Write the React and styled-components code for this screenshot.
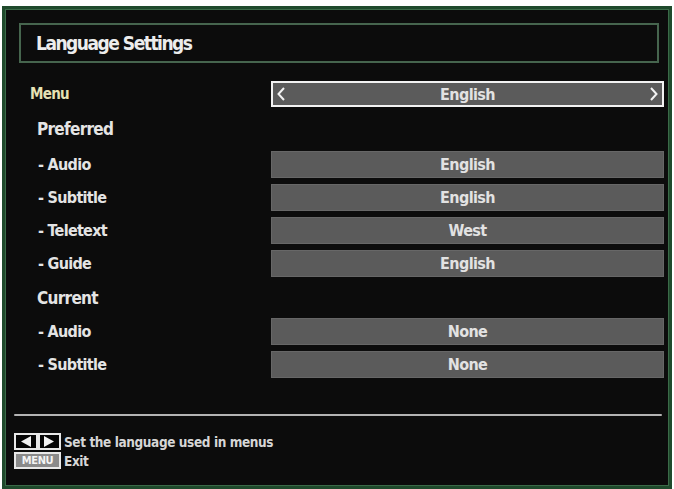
import React from "react";
import styled, { createGlobalStyle } from "styled-components";

const Global = createGlobalStyle`
  html, body { margin: 0; padding: 0; background: #ffffff; }
  body { font-family: "DejaVu Sans Condensed", "DejaVu Sans", sans-serif; }
  #root { width: 674px; height: 489px; }
`;

const Page = styled.div`
  width: 674px;
  height: 489px;
  padding: 6px 2px 0 2px;
  box-sizing: border-box;
`;

const Frame = styled.div`
  width: 670px;
  height: 483px;
  box-sizing: border-box;
  background: #0c0c0c;
  border: 3px solid #1f4a2c;
  box-shadow: inset 0 0 0 1px #3b6a48;
  padding: 14px 0 0 0;
  display: flex;
  flex-direction: column;
`;

const TitleBar = styled.div`
  margin-left: 14px;
  width: 640px;
  height: 40px;
  box-sizing: border-box;
  border: 2px solid #46654e;
  display: flex;
  align-items: center;
  padding-left: 15px;
`;

const Title = styled.span`
  color: #ececec;
  font-weight: bold;
  font-size: 19px;
  letter-spacing: -1.5px;
`;

const List = styled.div`
  margin-top: 18px;
  display: flex;
  flex-direction: column;
  gap: 6px;
`;

const Row = styled.div`
  display: grid;
  grid-template-columns: 266px 393px;
  height: ${(p) => p.$h || 27}px;
  align-items: center;
`;

const Label = styled.span`
  padding-left: ${(p) => p.$indent}px;
  color: ${(p) => (p.$accent ? "#e6e2b4" : "#e4e4e4")};
  font-weight: bold;
  font-size: ${(p) => p.$size || 16}px;
  letter-spacing: -0.7px;
`;

const Value = styled.div`
  height: 100%;
  box-sizing: border-box;
  background: #5b5b5b;
  border: ${(p) => (p.$selected ? "2px solid #f2f2f2" : "1px solid #676767")};
  display: flex;
  align-items: center;
  justify-content: space-between;
  padding: 0 3px;
  color: #e2e2e2;
  font-weight: bold;
  font-size: 16px;
  letter-spacing: -0.6px;
`;

const ValueText = styled.span`
  flex: 1;
  text-align: center;
`;

const Arrow = styled.span`
  width: 10px;
  display: flex;
  justify-content: center;
`;

const Separator = styled.div`
  margin-top: 36px;
  margin-left: 9px;
  width: 648px;
  height: 2px;
  background: #b4b4b4;
  border-radius: 1px;
`;

const Footer = styled.div`
  margin-top: 17px;
  margin-left: 9px;
  display: flex;
  flex-direction: column;
  gap: 2px;
`;

const HelpRow = styled.div`
  display: flex;
  align-items: center;
  gap: 3px;
  height: 17px;
`;

const KeyGroup = styled.div`
  display: flex;
  width: 47px;
  height: 17px;
`;

const ArrowKey = styled.div`
  flex: 1;
  box-sizing: border-box;
  border: 2px solid #e8e8e8;
  background: #050505;
  display: flex;
  align-items: center;
  justify-content: center;
`;

const MenuKey = styled.div`
  width: 47px;
  height: 17px;
  box-sizing: border-box;
  border: 2px solid #e8e8e8;
  background: #8a8a8a;
  color: #f4f4f4;
  font-weight: bold;
  font-size: 11px;
  letter-spacing: -0.3px;
  display: flex;
  align-items: center;
  justify-content: center;
`;

const HelpText = styled.span`
  color: #d6d6d6;
  font-weight: bold;
  font-size: 13.5px;
  letter-spacing: -0.4px;
`;

const Chevron = ({ dir }) => (
  <svg width="8" height="14" viewBox="0 0 8 14">
    <path
      d={dir === "left" ? "M7 1 L1.5 7 L7 13" : "M1 1 L6.5 7 L1 13"}
      fill="none"
      stroke="#f2f2f2"
      strokeWidth="2"
    />
  </svg>
);

const Tri = ({ dir }) => (
  <svg width="10" height="11" viewBox="0 0 10 11">
    <path d={dir === "left" ? "M10 0 L0 5.5 L10 11 Z" : "M0 0 L10 5.5 L0 11 Z"} fill="#f2f2f2" />
  </svg>
);

const rows = [
  { label: "Menu", indent: 25, accent: true, size: 15, value: "English", selected: true, h: 26 },
  { label: "Preferred", indent: 32, size: 17, h: 32 },
  { label: "- Audio", indent: 33, value: "English" },
  { label: "- Subtitle", indent: 33, value: "English" },
  { label: "- Teletext", indent: 33, value: "West" },
  { label: "- Guide", indent: 33, value: "English" },
  { label: "Current", indent: 32, size: 17, h: 29 },
  { label: "- Audio", indent: 33, value: "None" },
  { label: "- Subtitle", indent: 33, value: "None" },
];

export default function App() {
  return (
    <>
      <Global />
      <Page>
        <Frame>
          <TitleBar>
            <Title>Language Settings</Title>
          </TitleBar>
          <List>
            {rows.map((r, i) => (
              <Row key={i} $h={r.h}>
                <Label $indent={r.indent} $accent={r.accent} $size={r.size}>
                  {r.label}
                </Label>
                {r.value && (
                  <Value $selected={r.selected}>
                    {r.selected && (
                      <Arrow>
                        <Chevron dir="left" />
                      </Arrow>
                    )}
                    <ValueText>{r.value}</ValueText>
                    {r.selected && (
                      <Arrow>
                        <Chevron dir="right" />
                      </Arrow>
                    )}
                  </Value>
                )}
              </Row>
            ))}
          </List>
          <Separator />
          <Footer>
            <HelpRow>
              <KeyGroup>
                <ArrowKey>
                  <Tri dir="left" />
                </ArrowKey>
                <ArrowKey>
                  <Tri dir="right" />
                </ArrowKey>
              </KeyGroup>
              <HelpText>Set the language used in menus</HelpText>
            </HelpRow>
            <HelpRow>
              <MenuKey>MENU</MenuKey>
              <HelpText>Exit</HelpText>
            </HelpRow>
          </Footer>
        </Frame>
      </Page>
    </>
  );
}
